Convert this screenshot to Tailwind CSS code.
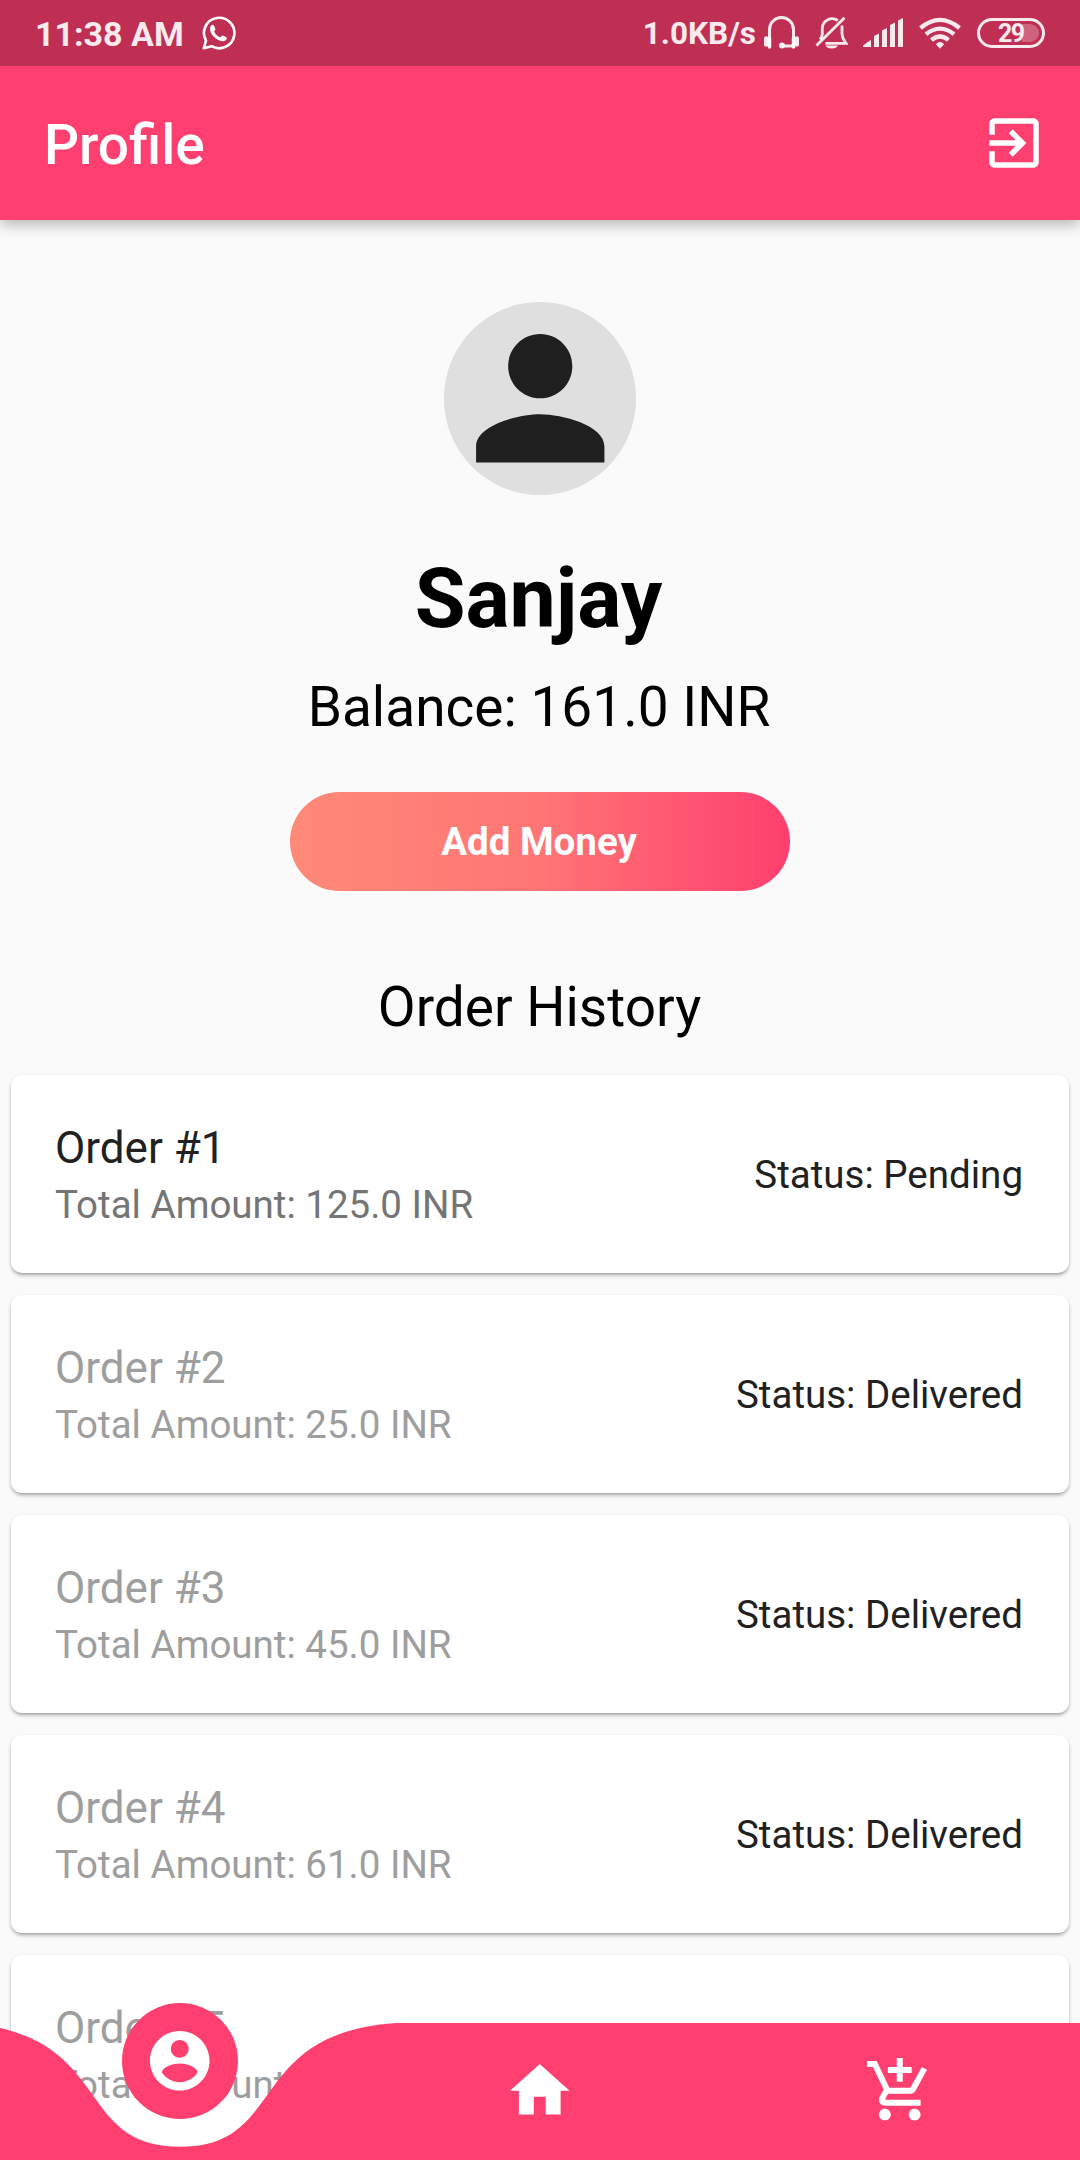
<!DOCTYPE html>
<html lang="en">
<head>
<meta charset="utf-8">
<title>Profile</title>
<script src="https://cdn.jsdelivr.net/npm/@tailwindcss/browser@4"></script>
</head>
<body class="bg-[#fafafa]">
<div class="relative flex h-[2160px] w-[1080px] flex-col overflow-hidden bg-[#fafafa] font-['Roboto',sans-serif] text-black">

  <!-- Status bar -->
  <div class="z-20 flex h-[66px] shrink-0 items-center bg-[#bf2f53] pl-[35px] pr-[35px] text-white/90">
    <span class="w-[150px] whitespace-nowrap text-[34px] leading-[66px] font-bold pt-[2px]">11:38 AM</span>
    <svg class="ml-[17px] h-[34px] w-[34px]" viewBox="0 0 34 34" fill="none" stroke="white" stroke-width="2.6">
      <path d="M1.8 32.2 4 24.6A15.2 15.2 0 1 1 9.6 30.2Z" stroke-linejoin="round"/>
      <path d="M9.2 9.6c1.2-1.2 2.4-1 3 .4l1.200 3c.3.9-1.500 2-1.200 2.800 1.200 2.400 3.200 4.300 5.800 5.400.9.300 1.800-2 2.800-1.700l3.200 1.500c1.200.600 1 1.800.2 2.700-1.700 1.800-4.200 1.800-6.700.8-4.200-1.700-7.300-4.700-8.900-8.600-.9-2.300-.8-4.700.6-6.300Z" fill="white" stroke="none"/>
    </svg>
    <span class="ml-auto whitespace-nowrap text-[31.500px] leading-[66px] font-bold pt-[2px]">1.0KB/s</span>
    <svg class="ml-[7px] h-[34px] w-[36px]" viewBox="0 0 36 34" fill="none" stroke="currentColor" stroke-width="3">
      <path d="M6.500 31V13.500a12 12 0 0 1 24 0V30H19"/>
      <path d="M3.200 22.500v6M33.800 22.500v6" stroke-width="4.500" stroke-linecap="round"/>
      <path d="M6.500 22v9M30.500 22v9" stroke-width="3.500" stroke-linecap="round"/>
      <circle cx="19" cy="29.500" r="3" fill="currentColor" stroke="none"/>
    </svg>
    <svg class="ml-[16px] h-[34px] w-[33px]" viewBox="0 0 33 34" fill="none" stroke="currentColor" stroke-width="2.800">
      <path d="M5 23.500C6.500 22 7.300 20.500 7.300 18V12a9.800 9.800 0 0 1 15.500-7.500"/>
      <path d="M27 9.500V18c0 4 2 6 4 9.300H10.500"/>
      <path d="M1.500 29.500 29.500 1.800"/>
      <path d="M10.500 29.500h12.500a6.500 4 0 0 1-12.500 0Z" fill="currentColor" stroke="none"/>
    </svg>
    <svg class="ml-[15px] h-[30px] w-[41px]" viewBox="0 0 41 30" fill="currentColor">
      <path d="M0 29v-1.500L7 22.500 8 22v7ZM11 29V18l5-2.500V29ZM19 29V12.500l5-2.500V29ZM27 29V7l5-2.500V29ZM35 29V2.500L40 0V29Z"/>
    </svg>
    <svg class="ml-[15px] h-[32px] w-[42px]" viewBox="0 0 42 32" fill="none" stroke="currentColor" stroke-width="4.300">
      <path d="M1.500 11Q21-5.200 40.500 11"/>
      <path d="M7 17.200Q21 6 35 17.200"/>
      <path d="M12.500 23.200Q21 16 29.500 23.200"/>
      <path d="M16.800 27.200Q21 23 25.200 27.200L21 31.800Z" fill="currentColor" stroke="none"/>
    </svg>
    <div class="ml-[16px] flex h-[30px] w-[68px] items-center rounded-full border-[3px] border-white/90">
      <span class="ml-[18px] w-[24px] pt-[2px] text-[25px] leading-[24px] font-bold tracking-[-1.5px]">29</span>
      <span class="h-[18px] w-[17px] rounded-r-full bg-white/25"></span>
    </div>
  </div>

  <!-- App bar -->
  <header class="z-10 flex h-[154px] shrink-0 items-center justify-between bg-[#ff3f6f] pl-[44px] pr-[33px] text-white shadow-[0_4px_14px_rgba(0,0,0,0.3)]">
    <h1 class="pt-[4px] text-[55px] leading-[64px] font-medium">Profile</h1>
    <svg class="h-[66px] w-[66px]" viewBox="0 0 24 24" fill="currentColor"><path d="M10.090 15.590 11.500 17l5-5-5-5-1.410 1.410L12.670 11H3v2h9.670l-2.580 2.590zM19 3H5c-1.110 0-2 .9-2 2v4h2V5h14v14H5v-4H3v4c0 1.100.890 2 2 2h14c1.100 0 2-.9 2-2V5c0-1.100-.9-2-2-2z"/></svg>
  </header>

  <!-- User summary -->
  <section class="flex h-[855px] shrink-0 flex-col items-center pt-[82px]">
    <div class="h-[192.500px] w-[192.500px] rounded-full bg-[#dfdfdf]">
      <svg class="h-full w-full" viewBox="0 0 24 24" fill="#1f1f1f"><path d="M12 12c2.210 0 4-1.790 4-4s-1.790-4-4-4-4 1.790-4 4 1.790 4 4 4zm0 2c-2.670 0-8 1.340-8 4v2h16v-2c0-2.660-5.330-4-8-4z"/></svg>
    </div>
    <h2 class="mt-[55.500px] pr-[3px] text-[82.500px] leading-[97px] font-bold">Sanjay</h2>
    <p class="mt-[28px] pr-[2px] text-[55px] leading-[64px]">Balance: 161.0 INR</p>
    <button class="mt-[53px] h-[99px] w-[500px] rounded-full bg-linear-to-r/srgb from-[#ff8a78] via-[#ff7575] to-[#ff3f6f] pr-[2px] text-[38.500px] font-bold text-white">Add Money</button>
    <h3 class="mt-[84px] pr-[1px] text-[55px] leading-[64px]">Order History</h3>
  </section>

  <!-- Orders -->
  <main class="flex flex-col gap-[22px] px-[11px]">
    <article class="flex h-[198px] shrink-0 items-center justify-between rounded-[11px] bg-white pr-[46px] pl-[44px] shadow-[0_3px_4px_-1px_rgba(0,0,0,0.32),0_1px_3px_rgba(0,0,0,0.12)]">
      <div class="pt-[2px] text-[#757575]"><p class="text-[44px] leading-[52px] text-[#212121]">Order #1</p><p class="mt-[8px] text-[38.500px] leading-[46px]">Total Amount: 125.0 INR</p></div>
      <p class="pt-[2px] text-[38.500px] text-[#212121]">Status: Pending</p>
    </article>
    <article class="flex h-[198px] shrink-0 items-center justify-between rounded-[11px] bg-white pr-[46px] pl-[44px] shadow-[0_3px_4px_-1px_rgba(0,0,0,0.32),0_1px_3px_rgba(0,0,0,0.12)]">
      <div class="pt-[2px] text-[#9e9e9e]"><p class="text-[44px] leading-[52px]">Order #2</p><p class="mt-[8px] text-[38.500px] leading-[46px]">Total Amount: 25.0 INR</p></div>
      <p class="pt-[2px] text-[38.500px] text-[#212121]">Status: Delivered</p>
    </article>
    <article class="flex h-[198px] shrink-0 items-center justify-between rounded-[11px] bg-white pr-[46px] pl-[44px] shadow-[0_3px_4px_-1px_rgba(0,0,0,0.32),0_1px_3px_rgba(0,0,0,0.12)]">
      <div class="pt-[2px] text-[#9e9e9e]"><p class="text-[44px] leading-[52px]">Order #3</p><p class="mt-[8px] text-[38.500px] leading-[46px]">Total Amount: 45.0 INR</p></div>
      <p class="pt-[2px] text-[38.500px] text-[#212121]">Status: Delivered</p>
    </article>
    <article class="flex h-[198px] shrink-0 items-center justify-between rounded-[11px] bg-white pr-[46px] pl-[44px] shadow-[0_3px_4px_-1px_rgba(0,0,0,0.32),0_1px_3px_rgba(0,0,0,0.12)]">
      <div class="pt-[2px] text-[#9e9e9e]"><p class="text-[44px] leading-[52px]">Order #4</p><p class="mt-[8px] text-[38.500px] leading-[46px]">Total Amount: 61.0 INR</p></div>
      <p class="pt-[2px] text-[38.500px] text-[#212121]">Status: Delivered</p>
    </article>
    <article class="flex h-[240px] shrink-0 items-start rounded-[11px] bg-white px-[44px] pt-[47px] shadow-[0_3px_4px_-1px_rgba(0,0,0,0.32),0_1px_3px_rgba(0,0,0,0.12)]">
      <div class="text-[#9e9e9e]"><p class="text-[44px] leading-[52px]">Order #5</p><p class="mt-[8px] text-[38.500px] leading-[46px]">Total Amount</p></div>
    </article>
  </main>

  <!-- Curved navigation bar, overlaid on the list -->
  <nav class="absolute inset-x-0 bottom-0 z-20 h-[160px]">
    <svg class="absolute bottom-0 left-0 h-[137.500px] w-full" viewBox="0 0 1080 137.5" fill="#ff3f6f"><path d="M-36 0C115.200 10.310 72 123.750 180 123.750S244.800 10.310 396 0H1080V137.500H-36Z"/></svg>
    <div class="relative grid h-full grid-cols-3 justify-items-center text-white">
      <div class="mt-[3px] flex h-[115.500px] w-[115.500px] items-center justify-center rounded-full bg-[#ff3f6f]">
        <svg class="h-[71.500px] w-[71.500px]" viewBox="0 0 24 24" fill="currentColor"><path d="M12 2C6.480 2 2 6.480 2 12s4.480 10 10 10 10-4.480 10-10S17.520 2 12 2zm0 3c1.660 0 3 1.340 3 3s-1.340 3-3 3-3-1.340-3-3 1.340-3 3-3zm0 14.200c-2.500 0-4.710-1.280-6-3.220.030-1.990 4-3.080 6-3.080 1.990 0 5.970 1.090 6 3.080-1.290 1.940-3.500 3.220-6 3.220z"/></svg>
      </div>
      <svg class="mt-[55px] h-[71.500px] w-[71.500px]" viewBox="0 0 24 24" fill="currentColor"><path d="M10 20v-6h4v6h5v-8h3L12 3 2 12h3v8z"/></svg>
      <svg class="mt-[55px] h-[71.500px] w-[71.500px]" viewBox="0 0 24 24" fill="currentColor"><path d="M11 9h2V6h3V4h-3V1h-2v3H8v2h3v3zm-4 9c-1.100 0-1.990.9-1.990 2S5.900 22 7 22s2-.9 2-2-.9-2-2-2zm10 0c-1.100 0-1.990.9-1.990 2s.890 2 1.990 2 2-.9 2-2-.9-2-2-2zm-9.830-3.250.030-.120.900-1.630h7.450c.750 0 1.410-.410 1.750-1.030l3.860-7.010L19.420 4h-.010l-1.100 2-2.760 5H8.530l-.130-.270L6.160 6l-.950-2-.940-2H1v2h2l3.600 7.590-1.350 2.450c-.160.280-.250.610-.250.960 0 1.100.9 2 2 2h12v-2H7.420c-.130 0-.250-.110-.250-.250z"/></svg>
    </div>
  </nav>
</div>
</body>
</html>
